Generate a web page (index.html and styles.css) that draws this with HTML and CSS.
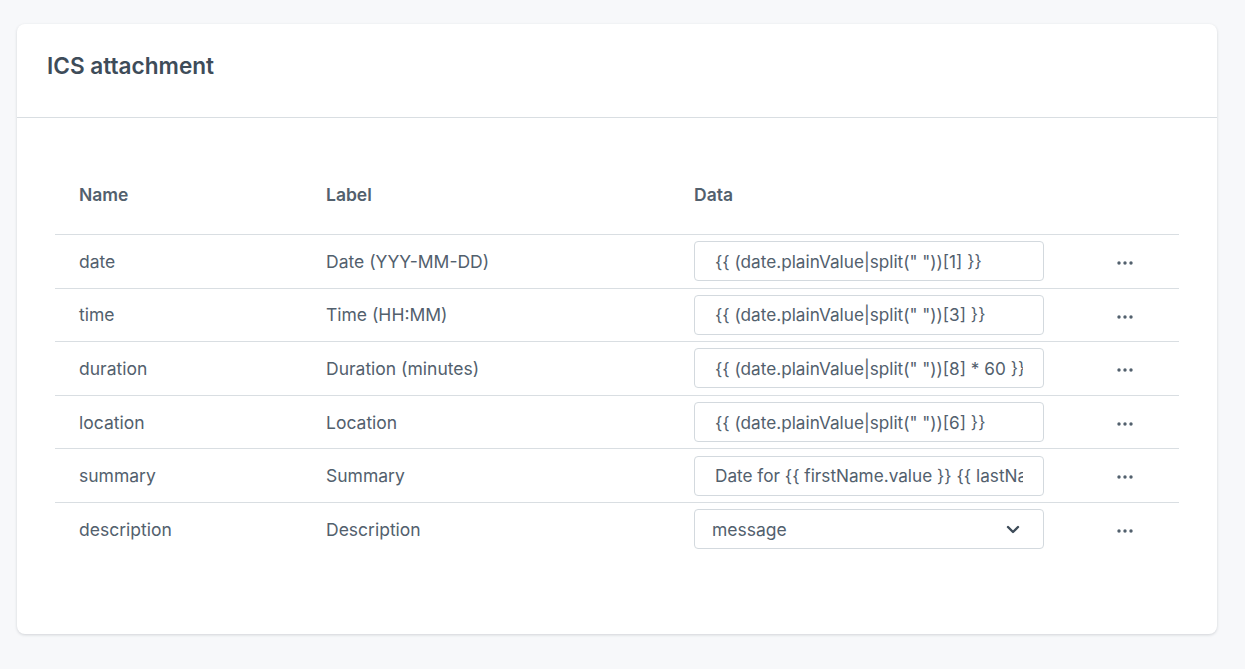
FILE: index.html
```html
<!DOCTYPE html>
<html lang="en">
<head>
<meta charset="utf-8">
<title>ICS attachment</title>
<link rel="stylesheet" href="styles.css">
</head>
<body>
<div class="page">
  <section class="card">
    <header class="card-header">
      <h2 class="card-title">ICS attachment</h2>
    </header>
    <div class="card-body">
      <table class="fields">
        <thead>
          <tr>
            <th class="col-name">Name</th>
            <th class="col-label">Label</th>
            <th class="col-data">Data</th>
            <th class="col-actions"></th>
          </tr>
        </thead>
        <tbody>
          <tr>
            <td>date</td>
            <td>Date (YYY-MM-DD)</td>
            <td><input class="field-input" type="text" value="{{ (date.plainValue|split(&quot; &quot;))[1] }}"></td>
            <td class="actions"><svg class="dots" width="16" height="4" viewBox="0 0 16 4"><circle cx="2" cy="2" r="1.7"/><circle cx="8" cy="2" r="1.7"/><circle cx="14" cy="2" r="1.7"/></svg></td>
          </tr>
          <tr>
            <td>time</td>
            <td>Time (HH:MM)</td>
            <td><input class="field-input" type="text" value="{{ (date.plainValue|split(&quot; &quot;))[3] }}"></td>
            <td class="actions"><svg class="dots" width="16" height="4" viewBox="0 0 16 4"><circle cx="2" cy="2" r="1.7"/><circle cx="8" cy="2" r="1.7"/><circle cx="14" cy="2" r="1.7"/></svg></td>
          </tr>
          <tr>
            <td>duration</td>
            <td>Duration (minutes)</td>
            <td><input class="field-input" type="text" value="{{ (date.plainValue|split(&quot; &quot;))[8] * 60 }}"></td>
            <td class="actions"><svg class="dots" width="16" height="4" viewBox="0 0 16 4"><circle cx="2" cy="2" r="1.7"/><circle cx="8" cy="2" r="1.7"/><circle cx="14" cy="2" r="1.7"/></svg></td>
          </tr>
          <tr>
            <td>location</td>
            <td>Location</td>
            <td><input class="field-input" type="text" value="{{ (date.plainValue|split(&quot; &quot;))[6] }}"></td>
            <td class="actions"><svg class="dots" width="16" height="4" viewBox="0 0 16 4"><circle cx="2" cy="2" r="1.7"/><circle cx="8" cy="2" r="1.7"/><circle cx="14" cy="2" r="1.7"/></svg></td>
          </tr>
          <tr>
            <td>summary</td>
            <td>Summary</td>
            <td><input class="field-input" type="text" value="Date for {{ firstName.value }} {{ lastName.value }}"></td>
            <td class="actions"><svg class="dots" width="16" height="4" viewBox="0 0 16 4"><circle cx="2" cy="2" r="1.7"/><circle cx="8" cy="2" r="1.7"/><circle cx="14" cy="2" r="1.7"/></svg></td>
          </tr>
          <tr>
            <td>description</td>
            <td>Description</td>
            <td>
              <div class="select-wrap">
                <select class="field-select">
                  <option>message</option>
                </select>
                <svg class="chevron" width="14" height="9" viewBox="0 0 14 9"><path d="M2 2 L7 7 L12 2" fill="none" stroke="#3e4c59" stroke-width="2.4" stroke-linecap="round" stroke-linejoin="round"/></svg>
              </div>
            </td>
            <td class="actions"><svg class="dots" width="16" height="4" viewBox="0 0 16 4"><circle cx="2" cy="2" r="1.7"/><circle cx="8" cy="2" r="1.7"/><circle cx="14" cy="2" r="1.7"/></svg></td>
          </tr>
        </tbody>
      </table>
    </div>
  </section>
</div>
</body>
</html>
```
FILE: styles.css
```css
html, body {
  margin: 0;
  padding: 0;
  background: #f7f8fa;
}
body {
  font-family: Inter, "Noto Sans", "Liberation Sans", sans-serif;
  color: #52606d;
  font-size: 17.5px;
}
.page {
  padding: 24px 28px 36px 17px;
}
.card {
  width: 1200px;
  background: #ffffff;
  border-radius: 8px;
  box-shadow: 0 1px 3px rgba(40, 50, 60, 0.18);
}
.card-header {
  height: 93px;
  border-bottom: 1px solid #d9dee2;
  display: flex;
  align-items: center;
  padding: 0 30px;
}
.card-title {
  margin: 0;
  font-size: 22.6px;
  font-weight: 600;
  color: #3e4c59;
  position: relative;
  top: -5px;
}
.card-body {
  padding: 36px 38px 78px 38px;
}
.fields {
  width: 100%;
  border-collapse: collapse;
  table-layout: fixed;
}
.fields th {
  height: 80px;
  padding: 0 24px;
  text-align: left;
  font-weight: 600;
  font-size: 17.5px;
  color: #52606d;
  vertical-align: middle;
}
.col-name { width: 199px; }
.col-label { width: 320px; }
.col-data { width: 349px; }
.fields td {
  padding: 6.3px 24px;
  border-top: 1px solid #d9dee2;
  vertical-align: middle;
  white-space: nowrap;
}
.fields td.actions {
  text-align: center;
  padding: 0 4px 0 8px;
}
.dots {
  fill: #52606d;
  display: inline-block;
  vertical-align: middle;
}
.field-input {
  box-sizing: border-box;
  width: 350px;
  height: 40px;
  border: 1px solid #d3d9de;
  border-radius: 4px;
  padding: 0 20px 0 20px;
  font-family: inherit;
  font-size: 17.2px;
  color: #52606d;
  background: #fff;
  outline: none;
  display: block;
}
.select-wrap {
  position: relative;
  width: 350px;
}
.field-select {
  box-sizing: border-box;
  width: 350px;
  height: 40px;
  border: 1px solid #d3d9de;
  border-radius: 4px;
  padding: 0 40px 0 17px;
  font-family: inherit;
  font-size: 17.5px;
  color: #52606d;
  background: #fff;
  -webkit-appearance: none;
  appearance: none;
  outline: none;
  display: block;
}
.chevron {
  position: absolute;
  right: 24px;
  top: 16px;
  pointer-events: none;
}
```
